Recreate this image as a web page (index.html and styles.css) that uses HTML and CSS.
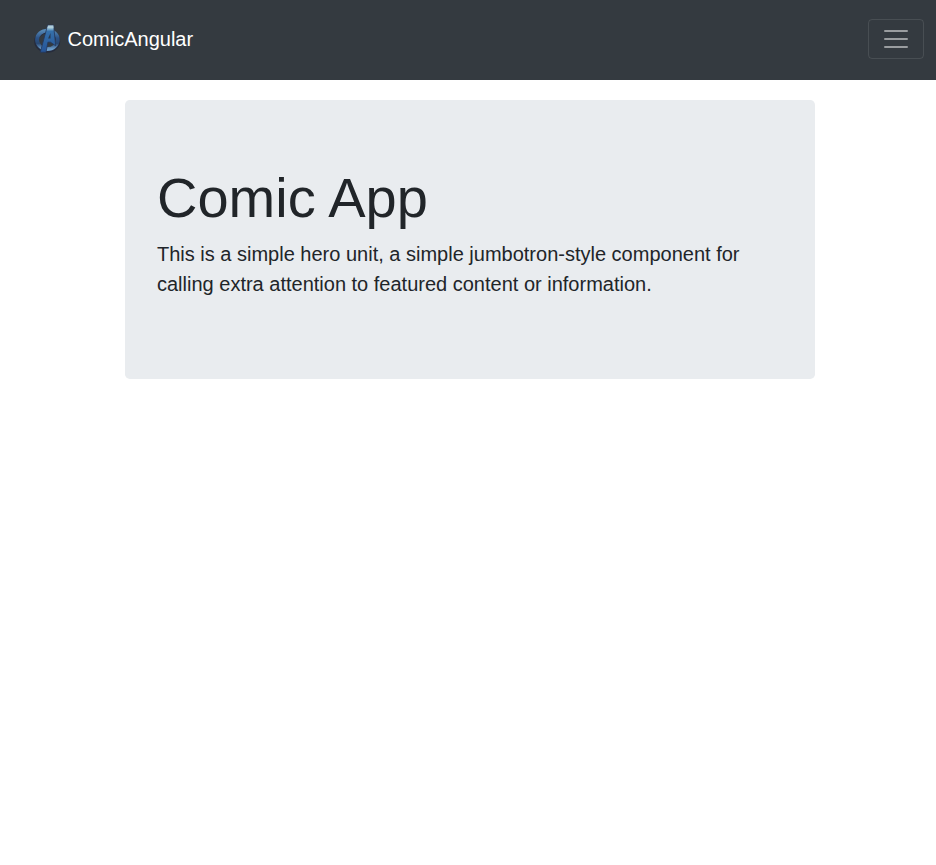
FILE: index.html
```html
<!DOCTYPE html>
<html lang="en">
<head>
<meta charset="utf-8">
<title>ComicAngular</title>
<link rel="stylesheet" href="styles.css">
</head>
<body>
<nav class="navbar">
  <a class="brand">
    <svg class="logo" viewBox="0 0 30 30" aria-hidden="true">
      <defs>
        <linearGradient id="ring" x1="0" y1="0" x2="0" y2="1">
          <stop offset="0" stop-color="#5587b4"/>
          <stop offset=".4" stop-color="#2c5387"/>
          <stop offset=".7" stop-color="#294872"/>
          <stop offset="1" stop-color="#6c9dcb"/>
        </linearGradient>
        <linearGradient id="letter" x1="0" y1="0" x2="0" y2="1">
          <stop offset="0" stop-color="#b5d4e2"/>
          <stop offset=".14" stop-color="#7fadcb"/>
          <stop offset=".22" stop-color="#3570aa"/>
          <stop offset="1" stop-color="#255497"/>
        </linearGradient>
      </defs>
      <ellipse cx="15.2" cy="17.2" rx="11" ry="9.6" fill="none" stroke="#252b3c" stroke-width="4"/>
      <ellipse cx="15.4" cy="15.8" rx="10.4" ry="9.2" fill="none" stroke="url(#ring)" stroke-width="3.8"/>
      <path d="M15.6 1.2h6l2.1 20.6-5.2-3.6h-2.6L14 28.2H8.3z" fill="url(#letter)" stroke="#24375a" stroke-width=".8"/>
      <path d="M18.5 9v5.4h-2.4z" fill="#28384e"/>
      <path d="M16.2 1.4h5.1l.2 2.8h-6.2z" fill="#b0cedb"/>
    </svg>
    <span>ComicAngular</span>
  </a>
  <button class="toggler" type="button" aria-label="Toggle navigation">
    <svg class="menu" viewBox="0 0 30 30"><path d="M4 7h22M4 15h22M4 23h22"/></svg>
  </button>
</nav>
<main class="container">
  <section class="jumbotron">
    <h1>Comic App</h1>
    <p>This is a simple hero unit, a simple jumbotron-style component for calling extra attention to featured content or information.</p>
  </section>
</main>
</body>
</html>
```
FILE: styles.css
```css
* { box-sizing: border-box; }
body {
  margin: 0;
  background: #fff;
  color: #212529;
  font-family: "Liberation Sans", Arial, sans-serif;
  line-height: 1.5;
}
.navbar {
  display: flex;
  align-items: center;
  justify-content: space-between;
  height: 80px;
  padding: 0 12px 2px 32px;
  background: #343a40;
}
.brand {
  display: flex;
  align-items: center;
  gap: 5.5px;
  color: #fff;
  font-size: 20px;
}
.logo { width: 30px; height: 30px; }
.toggler {
  width: 56px;
  height: 40px;
  padding: 0;
  display: flex;
  align-items: center;
  justify-content: center;
  background: transparent;
  border: 1px solid rgba(255, 255, 255, .1);
  border-radius: 4px;
}
.menu {
  width: 30px;
  height: 30px;
  fill: none;
  stroke: rgba(255, 255, 255, .5);
  stroke-width: 2;
  stroke-linecap: round;
}
.container {
  width: 690px;
  margin: 20px 0 0 125px;
}
.jumbotron {
  padding: 64px 32px;
  background: #e9ecef;
  border-radius: 4.8px;
}
h1 {
  margin: 0 0 8px;
  font-size: 56px;
  font-weight: 300;
  line-height: 1.2;
}
p {
  margin: 0 0 16px;
  font-size: 20px;
  font-weight: 300;
}
```
